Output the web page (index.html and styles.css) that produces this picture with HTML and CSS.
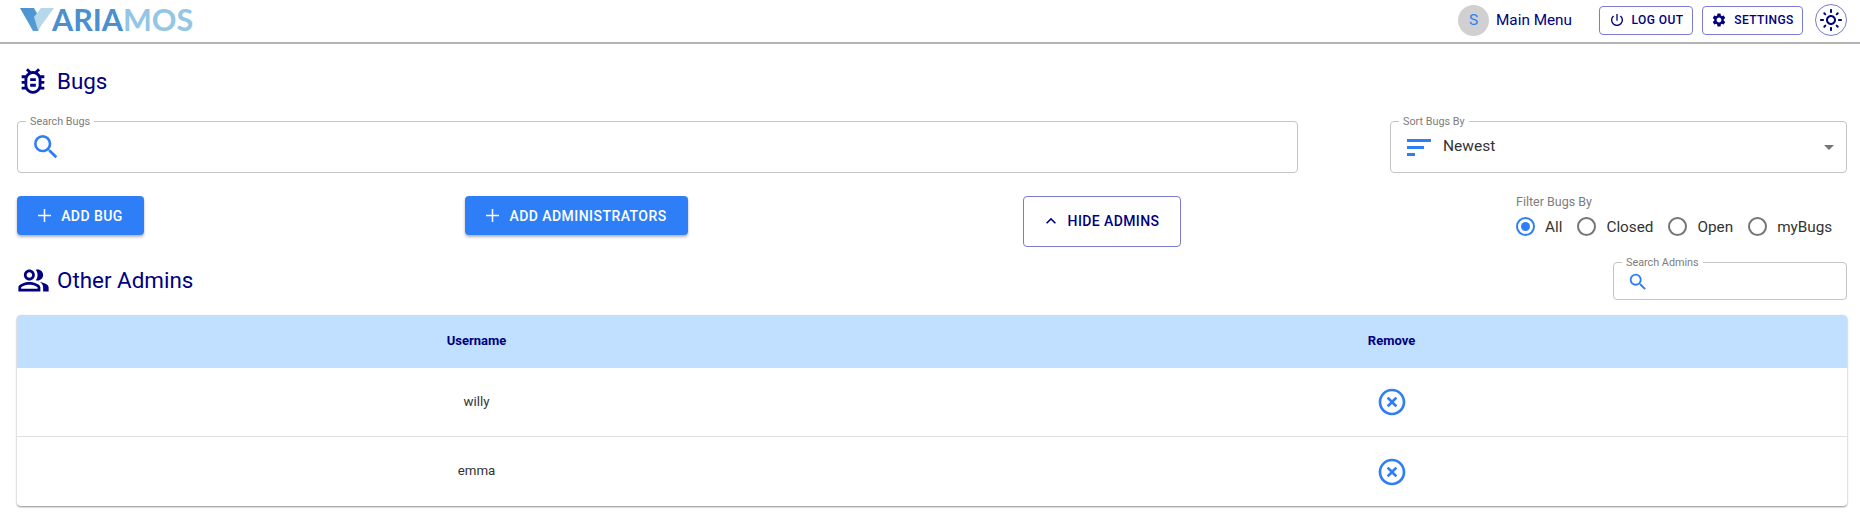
FILE: index.html
```html
<!DOCTYPE html>
<html lang="en">
<head>
<meta charset="utf-8">
<title>Bugs</title>
<link rel="stylesheet" href="styles.css">
</head>
<body>
<header class="topbar">
  <div class="logo">
    <svg class="logo-v" viewBox="0 0 34 23" width="34" height="23"><defs><linearGradient id="vg" x1="0" y1="0" x2="1" y2="1"><stop offset="0" stop-color="#4a90cf"/><stop offset="1" stop-color="#5a9fd8"/></linearGradient></defs><polygon points="0,0 14,0 22,14 18,23 13,23" fill="url(#vg)"/><polygon points="21,0 34,0 18,22 14,9" fill="#b5d8ea"/></svg>
    <span class="logo-dark">ARIA</span><span class="logo-light">MOS</span>
  </div>
  <div class="topbar-right">
    <div class="avatar">S</div>
    <span class="menu-label">Main Menu</span>
    <button class="btn-outline btn-top btn-logout">
      <svg class="ico-16" viewBox="0 0 24 24"><path d="M13 3h-2v10h2V3zm4.83 2.17-1.42 1.42C17.99 7.86 19 9.81 19 12c0 3.87-3.13 7-7 7s-7-3.13-7-7c0-2.19 1.01-4.14 2.58-5.42L6.17 5.17C4.23 6.82 3 9.26 3 12c0 4.97 4.03 9 9 9s9-4.03 9-9c0-2.74-1.23-5.18-3.17-6.83z"/></svg>
      LOG OUT
    </button>
    <button class="btn-outline btn-top btn-settings">
      <svg class="ico-16" viewBox="0 0 24 24"><path d="M19.14 12.94c.04-.3.06-.61.06-.94 0-.32-.02-.64-.07-.94l2.03-1.58a.49.49 0 0 0 .12-.61l-1.92-3.32a.488.488 0 0 0-.59-.22l-2.39.96c-.5-.38-1.03-.7-1.62-.94l-.36-2.54a.484.484 0 0 0-.48-.41h-3.84c-.24 0-.43.17-.47.41l-.36 2.54c-.59.24-1.13.57-1.62.94l-2.39-.96c-.22-.08-.47 0-.59.22L2.74 8.87c-.12.21-.08.47.12.61l2.03 1.58c-.05.3-.09.63-.09.94s.02.64.07.94l-2.03 1.58a.49.49 0 0 0-.12.61l1.92 3.32c.12.22.37.29.59.22l2.39-.96c.5.38 1.03.7 1.62.94l.36 2.54c.05.24.24.41.48.41h3.84c.24 0 .44-.17.47-.41l.36-2.54c.59-.24 1.13-.56 1.62-.94l2.39.96c.22.08.47 0 .59-.22l1.92-3.32c.12-.22.07-.47-.12-.61l-2.01-1.58zM12 15.6c-1.98 0-3.6-1.62-3.6-3.6s1.62-3.6 3.6-3.6 3.6 1.62 3.6 3.6-1.62 3.6-3.6 3.6z"/></svg>
      SETTINGS
    </button>
    <button class="theme-toggle" aria-label="Theme">
      <svg class="ico-22" viewBox="0 0 24 24"><path d="M9 12c0-1.65 1.35-3 3-3s3 1.35 3 3-1.35 3-3 3-3-1.35-3-3zm3-5c-2.76 0-5 2.24-5 5s2.24 5 5 5 5-2.24 5-5-2.24-5-5-5zM2 13h2c.55 0 1-.45 1-1s-.45-1-1-1H2c-.55 0-1 .45-1 1s.45 1 1 1zm18 0h2c.55 0 1-.45 1-1s-.45-1-1-1h-2c-.55 0-1 .45-1 1s.45 1 1 1zM11 2v2c0 .55.45 1 1 1s1-.45 1-1V2c0-.55-.45-1-1-1s-1 .45-1 1zm0 18v2c0 .55.45 1 1 1s1-.45 1-1v-2c0-.55-.45-1-1-1s-1 .45-1 1zM5.99 4.58a.996.996 0 0 0-1.41 0 .996.996 0 0 0 0 1.41l1.06 1.06c.39.39 1.03.39 1.41 0s.39-1.03 0-1.41L5.99 4.58zm12.37 12.37a.996.996 0 0 0-1.41 0 .996.996 0 0 0 0 1.41l1.06 1.06c.39.39 1.03.39 1.41 0a.996.996 0 0 0 0-1.41l-1.06-1.06zm1.06-10.96a.996.996 0 0 0 0-1.41.996.996 0 0 0-1.41 0l-1.06 1.06c-.39.39-.39 1.03 0 1.41s1.03.39 1.41 0l1.06-1.06zM7.05 18.36a.996.996 0 0 0 0-1.41.996.996 0 0 0-1.41 0l-1.06 1.06c-.39.39-.39 1.03 0 1.41s1.03.39 1.41 0l1.06-1.06z"/></svg>
    </button>
  </div>
</header>

<main class="page">
  <h1 class="section-title title-bugs">
    <svg class="ico-title" viewBox="0 0 24 24"><path d="M14 12h-4v-2h4v2zm0 4h-4v-2h4v2zm6-8h-2.81a5.985 5.985 0 0 0-1.82-1.96L17 4.41 15.59 3l-2.17 2.17a6.002 6.002 0 0 0-2.83 0L8.41 3 7 4.41l1.62 1.63C7.88 6.55 7.26 7.22 6.81 8H4v2h2.09c-.05.33-.09.66-.09 1v1H4v2h2v1c0 .34.04.67.09 1H4v2h2.81c1.04 1.79 2.97 3 5.19 3s4.15-1.21 5.19-3H20v-2h-2.09c.05-.33.09-.66.09-1v-1h2v-2h-2v-1c0-.34-.04-.67-.09-1H20V8zm-4 7c0 2.21-1.79 4-4 4s-4-1.79-4-4v-4c0-2.21 1.79-4 4-4s4 1.79 4 4v4z"/></svg>
    Bugs
  </h1>

  <div class="search-row">
    <fieldset class="field field-search">
      <legend>Search Bugs</legend>
      <svg class="ico-blue ico-search-lg" viewBox="0 0 24 24"><path d="M15.5 14h-.79l-.28-.27A6.47 6.47 0 0 0 16 9.5 6.5 6.5 0 1 0 9.5 16c1.61 0 3.09-.59 4.23-1.57l.27.28v.79l5 4.99L20.49 19l-4.99-5zm-6 0C7.01 14 5 11.99 5 9.5S7.01 5 9.5 5 14 7.01 14 9.5 11.99 14 9.5 14z"/></svg>
    </fieldset>
    <fieldset class="field field-sort">
      <legend>Sort Bugs By</legend>
      <svg class="ico-blue ico-sort" viewBox="0 0 24 17"><rect x="0" y="0" width="24" height="3"/><rect x="0" y="7" width="17" height="3"/><rect x="0" y="14" width="8" height="3"/></svg>
      <span class="sort-value">Newest</span>
      <span class="caret"></span>
    </fieldset>
  </div>

  <div class="actions">
    <div>
      <button class="btn-solid btn-add-bug"><svg class="plus" viewBox="0 0 13 13"><rect x="0" y="5.75" width="13" height="1.5"/><rect x="5.75" y="0" width="1.5" height="13"/></svg>ADD BUG</button>
    </div>
    <div>
      <button class="btn-solid btn-add-admin"><svg class="plus" viewBox="0 0 13 13"><rect x="0" y="5.75" width="13" height="1.5"/><rect x="5.75" y="0" width="1.5" height="13"/></svg>ADD ADMINISTRATORS</button>
    </div>
    <div>
      <button class="btn-outline btn-hide">
        <svg class="ico-chevron" viewBox="0 0 24 24"><path d="M7.41 15.41 12 10.83l4.59 4.58L18 14l-6-6-6 6z"/></svg>
        HIDE ADMINS
      </button>
    </div>
    <div class="filter">
      <div class="filter-label">Filter Bugs By</div>
      <div class="radios">
        <span class="radio"><span class="dot dot-on"></span>All</span>
        <span class="radio"><span class="dot"></span>Closed</span>
        <span class="radio"><span class="dot"></span>Open</span>
        <span class="radio"><span class="dot"></span>myBugs</span>
      </div>
    </div>
  </div>

  <div class="admins-head">
    <h2 class="section-title">
      <svg class="ico-people" viewBox="0 0 24 24"><path d="M16.67 13.13C18.04 14.06 19 15.32 19 17v3h4v-3c0-2.18-3.57-3.47-6.33-3.87zM15 12c2.21 0 4-1.79 4-4s-1.79-4-4-4c-.47 0-.91.1-1.33.24a5.98 5.98 0 0 1 0 7.52c.42.14.86.24 1.33.24zM9 12c2.21 0 4-1.79 4-4s-1.79-4-4-4-4 1.79-4 4 1.79 4 4 4zm0-6c1.1 0 2 .9 2 2s-.9 2-2 2-2-.9-2-2 .9-2 2-2zm0 7c-2.67 0-8 1.34-8 4v3h16v-3c0-2.66-5.33-4-8-4zm6 5H3v-.99C3.2 16.29 6.3 15 9 15s5.8 1.29 6 2v1z"/></svg>
      Other Admins
    </h2>
    <fieldset class="field field-admins">
      <legend>Search Admins</legend>
      <svg class="ico-blue ico-search-sm" viewBox="0 0 24 24"><path d="M15.5 14h-.79l-.28-.27A6.47 6.47 0 0 0 16 9.5 6.5 6.5 0 1 0 9.5 16c1.61 0 3.09-.59 4.23-1.57l.27.28v.79l5 4.99L20.49 19l-4.99-5zm-6 0C7.01 14 5 11.99 5 9.5S7.01 5 9.5 5 14 7.01 14 9.5 11.99 14 9.5 14z"/></svg>
    </fieldset>
  </div>

  <table class="admins-table">
    <thead>
      <tr><th>Username</th><th>Remove</th></tr>
    </thead>
    <tbody>
      <tr>
        <td>willy</td>
        <td><svg class="ico-remove" viewBox="0 0 24 24"><path d="M14.59 8 12 10.59 9.41 8 8 9.41 10.59 12 8 14.59 9.41 16 12 13.41 14.59 16 16 14.59 13.41 12 16 9.41 14.59 8zM12 2C6.47 2 2 6.47 2 12s4.47 10 10 10 10-4.47 10-10S17.53 2 12 2zm0 18c-4.41 0-8-3.59-8-8s3.59-8 8-8 8 3.59 8 8-3.59 8-8 8z"/></svg></td>
      </tr>
      <tr>
        <td>emma</td>
        <td><svg class="ico-remove" viewBox="0 0 24 24"><path d="M14.59 8 12 10.59 9.41 8 8 9.41 10.59 12 8 14.59 9.41 16 12 13.41 14.59 16 16 14.59 13.41 12 16 9.41 14.59 8zM12 2C6.47 2 2 6.47 2 12s4.47 10 10 10 10-4.47 10-10S17.53 2 12 2zm0 18c-4.41 0-8-3.59-8-8s3.59-8 8-8 8 3.59 8 8-3.59 8-8 8z"/></svg></td>
      </tr>
    </tbody>
  </table>
</main>
</body>
</html>
```
FILE: styles.css
```css
* { box-sizing: border-box; }
html, body { margin: 0; padding: 0; background: #fff; }
body { font-family: Roboto, "Liberation Sans", sans-serif; color: #000080; height: 517px; overflow: hidden; }
button { font-family: inherit; cursor: pointer; margin: 0; }
svg { display: block; flex: none; fill: currentColor; }

.topbar { height: 44px; display: flex; align-items: center; justify-content: space-between; padding: 0 13px 0 20px; border-bottom: 2px solid #b4b4b4; }
.logo { display: flex; align-items: center; font-family: Lato, sans-serif; font-weight: 700; font-size: 30.5px; line-height: 1; margin-top: -4px; }
.logo-v { margin-right: -2px; }
.logo-dark { color: #4a90cf; }
.logo-light { color: #93c6e4; }

.topbar-right { display: flex; align-items: center; margin-top: -2px; }
.avatar { width: 31px; height: 31px; border-radius: 50%; background: #d0d0d0; color: #2e7ff7; display: flex; align-items: center; justify-content: center; font-size: 15.5px; }
.menu-label { font-size: 15.3px; margin-left: 7px; color: #000080; width: 103px; }
.btn-outline { background: #fff; border: 1px solid #7b7bcf; border-radius: 4px; color: #000080; font-weight: 500; letter-spacing: .4px; display: inline-flex; align-items: center; }
.btn-top { height: 29px; font-size: 12px; padding: 0; justify-content: center; }
.btn-logout { width: 94px; gap: 7px; }
.btn-settings { width: 101px; gap: 7px; margin-left: 9px; }
.ico-16 { width: 16px; height: 16px; }
.theme-toggle { width: 32px; height: 32px; border-radius: 50%; border: 1px solid #7b7bcf; background: #fff; color: #000080; padding: 0; margin-left: 12px; display: flex; align-items: center; justify-content: center; }
.ico-22 { width: 24px; height: 24px; }

.page { padding: 0 13px 0 17px; }
.section-title { margin: 0; font-weight: 400; font-size: 22.4px; line-height: 28px; color: #000080; display: flex; align-items: center; }
.title-bugs { padding: 10px 0 0 0; gap: 7px; height: 64px; }
.ico-title { width: 34px; height: 34px; margin-left: -1px; }

.field { margin: 0; padding: 0 0 5px 0; border: 1px solid #c4c4c4; border-radius: 4px; display: flex; align-items: center; min-width: 0; }
.field legend { font-size: 10.8px; line-height: 11px; color: #7d7d7d; margin-left: 8px; padding: 0 4px; }
.search-row { display: flex; justify-content: space-between; margin-top: 8px; }
.field-search { width: 1281px; height: 57px; }
.field-sort { width: 457px; height: 57px; }
.ico-blue { color: #2e7ff7; fill: #2e7ff7; }
.ico-search-lg { width: 32px; height: 32px; margin-left: 12px; }
.ico-sort { width: 24px; height: 17px; margin-left: 16px; }
.sort-value { font-size: 15.5px; color: #333; margin-left: 12px; margin-top: -2px; }
.caret { margin-left: auto; margin-right: 12px; width: 0; height: 0; border: 5px solid transparent; border-top-color: #757575; border-bottom: 0; }

.actions { display: grid; grid-template-columns: 448px 558px 493px 1fr; margin-top: 23px; height: 51px; }
.btn-solid { height: 39px; background: #2e7ff7; border: 0; border-radius: 4px; color: #fff; font-size: 14px; font-weight: 500; letter-spacing: .45px; display: inline-flex; align-items: center; justify-content: center; box-shadow: 0 2px 3px rgba(0,0,0,.3); padding: 0; }
.plus { width: 13px; height: 13px; margin-right: 10px; fill: #fff; }
.btn-add-bug { width: 127px; }
.btn-add-admin { width: 223px; }
.btn-hide { width: 158px; height: 51px; font-size: 14px; justify-content: center; gap: 7px; padding: 0 4px 2px 0; }
.ico-chevron { width: 20px; height: 20px; }
.filter-label { font-size: 12.5px; color: #7d7d7d; margin-top: -1px; line-height: 14px; }
.radios { display: flex; align-items: center; margin-top: 8px; font-size: 15.3px; color: #333; }
.radio { display: inline-flex; align-items: center; gap: 10px; margin-right: 15px; }
.dot { width: 19px; height: 19px; border: 2px solid #757575; border-radius: 50%; position: relative; display: inline-block; }
.dot-on { border-color: #2e7ff7; }
.dot-on::after { content: ""; position: absolute; inset: 3px; background: #2e7ff7; border-radius: 50%; }

.admins-head { display: flex; justify-content: space-between; align-items: flex-start; margin-top: 15px; }
.admins-head .section-title { gap: 7px; margin-top: 0; }
.ico-people { width: 33px; height: 33px; margin-top: 2px; }
.field-admins { width: 234px; height: 43px; margin-top: -5px; padding-bottom: 3px; }
.ico-search-sm { width: 22px; height: 22px; margin-left: 13px; }

.admins-table { width: 100%; margin-top: 15px; border-collapse: separate; border-spacing: 0; border-radius: 4px; table-layout: fixed; box-shadow: 0 1px 2px rgba(0,0,0,.45); font-size: 13.3px; }
.admins-table th { background: #c1dffe; height: 53px; font-weight: 700; font-size: 13px; color: #000080; text-align: center; padding: 0 0 2px 4px; }
.admins-table th:first-child { border-top-left-radius: 4px; }
.admins-table th:last-child { border-top-right-radius: 4px; }
.admins-table td { height: 69px; text-align: center; color: #333; border-bottom: 1px solid #e0e0e0; padding: 0 0 0 4px; }
.admins-table td:first-child { padding-bottom: 2px; }
.admins-table tbody tr:last-child td { border-bottom: 0; }
.ico-remove { width: 32px; height: 32px; color: #2e7ff7; fill: #2e7ff7; margin: 0 auto; }
```
